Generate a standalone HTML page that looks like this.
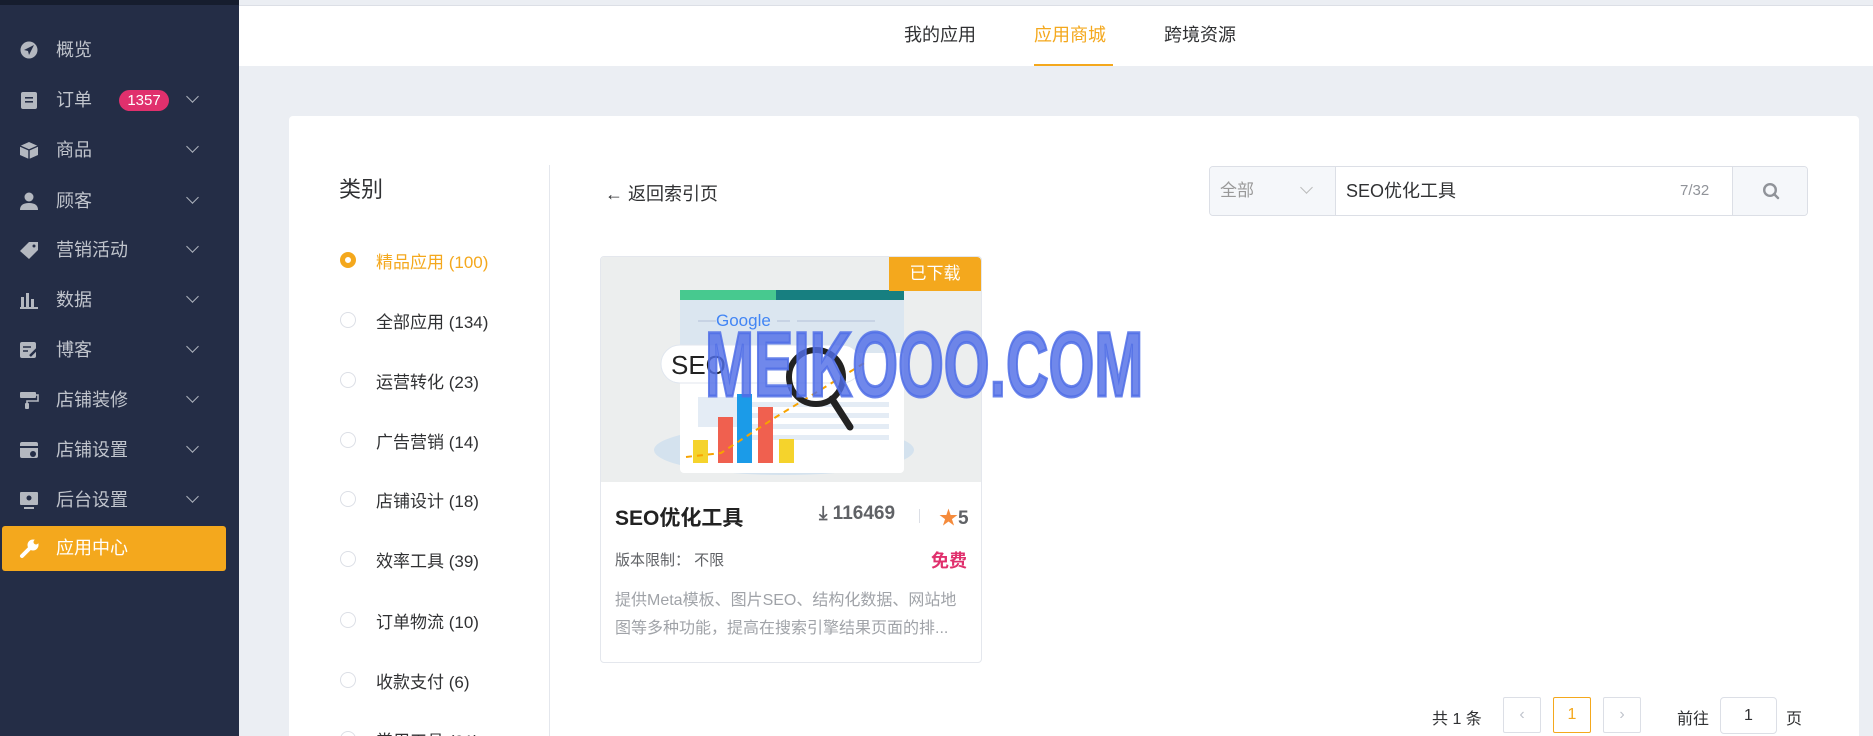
<!DOCTYPE html>
<html><head><meta charset="utf-8"><style>
*{box-sizing:border-box;margin:0;padding:0}
html{width:1873px;height:736px;overflow:hidden}
body{width:1873px;height:736px;overflow:hidden;background:#ebeef3;font-family:"Liberation Sans","Noto Sans CJK SC",sans-serif;position:relative;color:#303133}
.abs{position:absolute}
#side{left:0;top:0;width:239px;height:736px;background:#242d46}
#side .top{left:0;top:0;width:239px;height:5px;background:#161d2e}
.mi{position:absolute;left:0;width:239px;height:40px;color:#c0c4cc;font-size:18px;line-height:40px}
.mi .ic{position:absolute;left:19px;top:11px;width:20px;height:18px}
.mi .t{position:absolute;left:56px;top:0}
.mi .ch{position:absolute;left:188px;top:12px;width:9px;height:9px;border-right:1.5px solid #aeb3bd;border-bottom:1.5px solid #aeb3bd;transform:rotate(45deg)}
#topbar{left:239px;top:5px;width:1634px;height:61px;background:#fff;border-top:1px solid #dcdfe6}
.tab{position:absolute;top:15px;font-size:18px;color:#303133}
#card{left:289px;top:116px;width:1570px;height:620px;background:#fff;border-radius:4px 4px 0 0}
.rad{position:absolute;left:340px;width:16px;height:16px;border:1px solid #dcdfe6;border-radius:50%}
.rt{position:absolute;left:376px;font-size:17px;color:#303133}
</style></head><body>
<div id="side" class="abs">
<div class="top abs"></div>
<div class="mi" style="top:30px"><svg class="ic" viewBox="0 0 20 18"><circle cx="10" cy="9" r="8.5" fill="#b4b8c0"/><path d="M5 9 L15 4 L10 14 L9 10 Z" fill="#242d46"/></svg><span class="t">概览</span></div>
<div class="mi" style="top:80px"><svg class="ic" viewBox="0 0 20 18"><rect x="2" y="1" width="16" height="17" rx="2" fill="#b4b8c0"/><rect x="6" y="6" width="8" height="1.6" fill="#242d46"/><rect x="6" y="10" width="8" height="1.6" fill="#242d46"/></svg><span class="t">订单</span><span style="position:absolute;left:119px;top:10px;width:50px;height:21px;background:#e0306d;border-radius:11px;color:#fff;font-size:15px;line-height:21px;text-align:center">1357</span><span class="ch"></span></div>
<div class="mi" style="top:130px"><svg class="ic" viewBox="0 0 20 18"><path d="M10 1 L19 5 L19 14 L10 18 L1 14 L1 5 Z" fill="#b4b8c0"/><path d="M1 5 L10 9 L19 5 M10 9 V18" stroke="#242d46" stroke-width="1.4" fill="none"/></svg><span class="t">商品</span><span class="ch"></span></div>
<div class="mi" style="top:181px"><svg class="ic" viewBox="0 0 20 18"><circle cx="10" cy="5" r="4.5" fill="#b4b8c0"/><path d="M1 18 Q1 11 10 11 Q19 11 19 18 Z" fill="#b4b8c0"/></svg><span class="t">顾客</span><span class="ch"></span></div>
<div class="mi" style="top:230px"><svg class="ic" viewBox="0 0 20 18"><path d="M1 10 L10 1 L19 1 L19 9 L10 18 Z" fill="#b4b8c0"/><circle cx="15" cy="5" r="1.5" fill="#242d46"/></svg><span class="t">营销活动</span><span class="ch"></span></div>
<div class="mi" style="top:280px"><svg class="ic" viewBox="0 0 20 18"><rect x="2" y="6" width="3" height="10" fill="#b4b8c0"/><rect x="7" y="2" width="3" height="14" fill="#b4b8c0"/><rect x="12" y="8" width="3" height="8" fill="#b4b8c0"/><rect x="1" y="16" width="18" height="2" fill="#b4b8c0"/></svg><span class="t">数据</span><span class="ch"></span></div>
<div class="mi" style="top:330px"><svg class="ic" viewBox="0 0 20 18"><rect x="1" y="1" width="16" height="16" rx="2" fill="#b4b8c0"/><path d="M4 6 H12 M4 10 H9" stroke="#242d46" stroke-width="1.6"/><path d="M11 15 L18 8" stroke="#242d46" stroke-width="2.5"/></svg><span class="t">博客</span><span class="ch"></span></div>
<div class="mi" style="top:380px"><svg class="ic" viewBox="0 0 20 18"><rect x="1" y="1" width="16" height="6" rx="1" fill="#b4b8c0"/><path d="M17 4 H19 V10 H8 V12" stroke="#b4b8c0" stroke-width="1.6" fill="none"/><rect x="6" y="12" width="4" height="6" rx="1" fill="#b4b8c0"/></svg><span class="t">店铺装修</span><span class="ch"></span></div>
<div class="mi" style="top:430px"><svg class="ic" viewBox="0 0 20 18"><rect x="1" y="1" width="18" height="16" rx="2" fill="#b4b8c0"/><rect x="1" y="5" width="18" height="2" fill="#242d46"/><circle cx="14" cy="13" r="3" fill="#242d46"/></svg><span class="t">店铺设置</span><span class="ch"></span></div>
<div class="mi" style="top:480px"><svg class="ic" viewBox="0 0 20 18"><rect x="1" y="1" width="18" height="13" rx="1" fill="#b4b8c0"/><circle cx="10" cy="7" r="2.5" fill="#242d46"/><rect x="5" y="16" width="10" height="2" fill="#b4b8c0"/></svg><span class="t">后台设置</span><span class="ch"></span></div>
<div style="position:absolute;left:2px;top:526px;width:224px;height:45px;background:#f4a81d;border-radius:3px;color:#fff;font-size:18px;line-height:45px"><svg style="position:absolute;left:17px;top:13px" width="22" height="20" viewBox="0 0 22 20"><path d="M3 17 L11 9" stroke="#fff" stroke-width="4" stroke-linecap="round"/><circle cx="14" cy="6" r="5.5" fill="#fff"/><circle cx="17" cy="3" r="2.5" fill="#f4a81d"/></svg><span style="position:absolute;left:54px">应用中心</span></div>
</div>

<div id="topbar" class="abs">
<span class="tab" style="left:665px">我的应用</span>
<span class="tab" style="left:795px;color:#f4a81d">应用商城</span>
<span class="tab" style="left:925px">跨境资源</span>
<div style="position:absolute;left:795px;top:58px;width:79px;height:2px;background:#f4a81d"></div>
</div>

<div id="card" class="abs"></div>
<div class="abs" style="left:339px;top:172px;font-size:22px;color:#303133">类别</div>
<div class="abs" style="left:549px;top:165px;width:1px;height:571px;background:#e4e7ed"></div>

<div class="rad" style="top:252px;border:5px solid #f4a81d;background:#fff"></div><div class="rt" style="top:248px;color:#f4a81d">精品应用 (100)</div>
<div class="rad" style="top:312px"></div><div class="rt" style="top:308px">全部应用 (134)</div>
<div class="rad" style="top:372px"></div><div class="rt" style="top:368px">运营转化 (23)</div>
<div class="rad" style="top:432px"></div><div class="rt" style="top:428px">广告营销 (14)</div>
<div class="rad" style="top:491px"></div><div class="rt" style="top:487px">店铺设计 (18)</div>
<div class="rad" style="top:551px"></div><div class="rt" style="top:547px">效率工具 (39)</div>
<div class="rad" style="top:612px"></div><div class="rt" style="top:608px">订单物流 (10)</div>
<div class="rad" style="top:672px"></div><div class="rt" style="top:668px">收款支付 (6)</div>
<div class="rad" style="top:731px"></div><div class="rt" style="top:727px">常用工具 (21)</div>

<div class="abs" style="left:605px;top:180px;font-size:18px;color:#303133">&#8592; 返回索引页</div>

<div class="abs" style="left:1209px;top:166px;width:599px;height:50px;border:1px solid #dcdfe6;border-radius:4px;background:#fff;overflow:hidden">
<div style="position:absolute;left:0;top:0;width:126px;height:48px;background:#f5f7fa;border-right:1px solid #dcdfe6;color:#999;font-size:17px;line-height:48px;padding-left:10px">全部<span style="position:absolute;left:92px;top:16px;width:9px;height:9px;border-right:1px solid #bbb;border-bottom:1px solid #bbb;transform:rotate(45deg)"></span></div>
<div style="position:absolute;left:136px;top:0;line-height:48px;font-size:18px;color:#303133">SEO优化工具</div>
<div style="position:absolute;left:470px;top:0;line-height:48px;font-size:15px;color:#909399">7/32</div>
<div style="position:absolute;left:522px;top:0;width:77px;height:48px;background:#f5f7fa;border-left:1px solid #dcdfe6"><svg style="position:absolute;left:29px;top:15px" width="18" height="18" viewBox="0 0 18 18"><circle cx="8" cy="8" r="5.8" stroke="#909399" stroke-width="2.4" fill="none"/><path d="M12 12 L16 16" stroke="#909399" stroke-width="2.4" stroke-linecap="round"/></svg></div>
</div>

<div class="abs" style="left:600px;top:256px;width:382px;height:407px;border:1px solid #e4e7ed;border-radius:4px;background:#fff;overflow:hidden">
<div style="position:absolute;left:0;top:0;width:382px;height:225px;background:#eceeee">
<svg width="382" height="225" viewBox="0 0 382 225">
<ellipse cx="183" cy="193" rx="130" ry="25" fill="#d4e2ee"/>
<rect x="79" y="36" width="224" height="180" rx="4" fill="#fff"/>
<rect x="79" y="36" width="224" height="60" fill="#dbe6f0"/>
<rect x="79" y="33" width="100" height="10" fill="#47c98f"/>
<rect x="175" y="33" width="128" height="10" fill="#177f80"/>
<text x="115" y="69" font-family="Liberation Sans" font-size="17" fill="#4285f4">Google</text>
<path d="M97 64 H115 M176 64 H189 M196 64 H274" stroke="#c7d3e4" stroke-width="2"/>
<rect x="60" y="88" width="200" height="38" rx="19" fill="#fff" stroke="#e0e6ee"/>
<text x="70" y="117" font-family="Liberation Sans" font-size="26" fill="#222">SEO</text>
<rect x="97" y="140" width="40" height="30" fill="#e4ecf5"/>
<rect x="148" y="145" width="140" height="5" fill="#e4ecf5"/><rect x="148" y="156" width="140" height="5" fill="#e4ecf5"/><rect x="148" y="167" width="140" height="5" fill="#e4ecf5"/><rect x="148" y="178" width="140" height="5" fill="#e4ecf5"/>
<rect x="92" y="183" width="15" height="23" fill="#f5d32c"/><rect x="117" y="160" width="15" height="46" fill="#f0604f"/><rect x="136" y="137" width="15" height="69" fill="#1b9be8"/><rect x="157" y="150" width="15" height="56" fill="#f0604f"/><rect x="178" y="182" width="15" height="24" fill="#f5d32c"/>
<path d="M85 200 L120 196 L175 160 L265 105" stroke="#f7a300" stroke-width="2" stroke-dasharray="6 5" fill="none"/>
<circle cx="215" cy="120" r="27" stroke="#222" stroke-width="6" fill="none"/>
<path d="M231 142 L249 170" stroke="#222" stroke-width="7" stroke-linecap="round"/>
</svg>
</div>
<div style="position:absolute;right:0;top:0;width:92px;height:34px;background:#f4a81d;color:#fff;font-size:17px;line-height:34px;text-align:center;border-radius:0 4px 0 0">已下载</div>
<div style="position:absolute;left:14px;top:245px;font-size:21px;font-weight:bold;color:#222">SEO优化工具</div>
<div style="position:absolute;left:218px;top:246px;font-size:19px;font-weight:bold;color:#606266">&#10515; 116469</div>
<div style="position:absolute;left:318px;top:252px;width:1px;height:14px;background:#dcdfe6"></div>
<div style="position:absolute;left:338px;top:246px;font-size:19px;font-weight:bold;color:#606266"><span style="color:#f58b3c">&#9733;</span>5</div>
<div style="position:absolute;left:14px;top:292px;font-size:15px;color:#606266">版本限制：&nbsp;不限</div>
<div style="position:absolute;right:14px;top:290px;font-size:18px;font-weight:bold;color:#e0306d">免费</div>
<div style="position:absolute;left:14px;top:330px;width:352px;font-size:16px;line-height:28px;color:#a0a3a8">提供Meta模板、图片SEO、结构化数据、网站地图等多种功能，提高在搜索引擎结果页面的排...</div>
</div>

<div class="abs" style="left:705px;top:325px;font-family:'Liberation Sans',sans-serif;font-weight:bold;font-size:92px;line-height:80px;color:rgba(80,110,230,0.82);transform:scaleX(0.64);transform-origin:0 0;-webkit-text-stroke:3px rgba(80,110,230,0.85);white-space:nowrap">MEIKOOO.COM</div>

<div class="abs" style="left:1432px;top:705px;font-size:16px;color:#303133">共 1 条</div>
<div class="abs" style="left:1503px;top:697px;width:38px;height:36px;border:1px solid #dcdfe6;border-radius:2px;color:#c0c4cc;text-align:center;line-height:34px">&#8249;</div>
<div class="abs" style="left:1553px;top:697px;width:38px;height:36px;border:1px solid #f4a81d;border-radius:2px;color:#f4a81d;text-align:center;line-height:34px;font-size:16px">1</div>
<div class="abs" style="left:1603px;top:697px;width:38px;height:36px;border:1px solid #dcdfe6;border-radius:2px;color:#c0c4cc;text-align:center;line-height:34px">&#8250;</div>
<div class="abs" style="left:1677px;top:705px;font-size:16px;color:#303133">前往</div>
<div class="abs" style="left:1720px;top:697px;width:57px;height:37px;border:1px solid #dcdfe6;border-radius:4px;text-align:center;line-height:35px;font-size:16px">1</div>
<div class="abs" style="left:1786px;top:705px;font-size:16px;color:#303133">页</div>
</body></html>
